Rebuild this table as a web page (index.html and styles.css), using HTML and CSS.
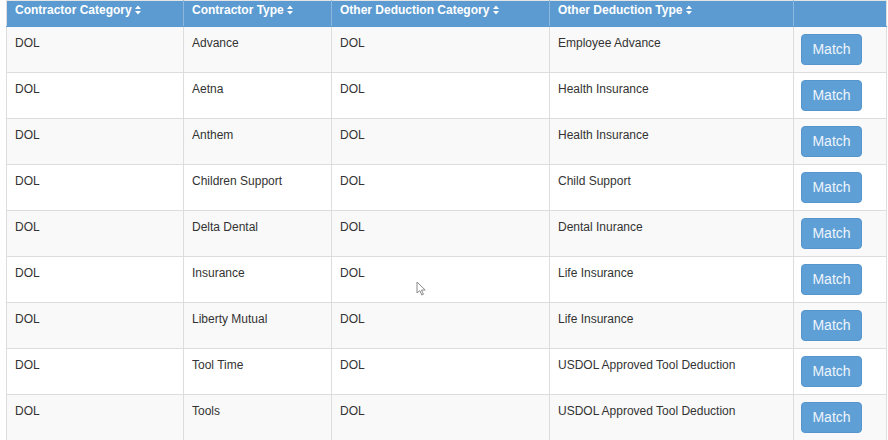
FILE: index.html
```html
<!DOCTYPE html>
<html>
<head>
<meta charset="utf-8">
<link rel="stylesheet" href="styles.css">
</head>
<body>
<div class="wrap">
<table class="grid">
  <colgroup>
    <col class="c1"><col class="c2"><col class="c3"><col class="c4"><col class="c5">
  </colgroup>
  <thead>
    <tr>
      <th>Contractor Category <svg class="sort" viewBox="0 0 6 10" width="6" height="10"><path d="M0 4 L3 0.5 L6 4 Z M0 6 L3 9.5 L6 6 Z" fill="#fff"/></svg></th>
      <th>Contractor Type <svg class="sort" viewBox="0 0 6 10" width="6" height="10"><path d="M0 4 L3 0.5 L6 4 Z M0 6 L3 9.5 L6 6 Z" fill="#fff"/></svg></th>
      <th>Other Deduction Category <svg class="sort" viewBox="0 0 6 10" width="6" height="10"><path d="M0 4 L3 0.5 L6 4 Z M0 6 L3 9.5 L6 6 Z" fill="#fff"/></svg></th>
      <th>Other Deduction Type <svg class="sort" viewBox="0 0 6 10" width="6" height="10"><path d="M0 4 L3 0.5 L6 4 Z M0 6 L3 9.5 L6 6 Z" fill="#fff"/></svg></th>
      <th></th>
    </tr>
  </thead>
  <tbody>
    <tr><td>DOL</td><td>Advance</td><td>DOL</td><td>Employee Advance</td><td><button class="btn">Match</button></td></tr>
    <tr><td>DOL</td><td>Aetna</td><td>DOL</td><td>Health Insurance</td><td><button class="btn">Match</button></td></tr>
    <tr><td>DOL</td><td>Anthem</td><td>DOL</td><td>Health Insurance</td><td><button class="btn">Match</button></td></tr>
    <tr><td>DOL</td><td>Children Support</td><td>DOL</td><td>Child Support</td><td><button class="btn">Match</button></td></tr>
    <tr><td>DOL</td><td>Delta Dental</td><td>DOL</td><td>Dental Inurance</td><td><button class="btn">Match</button></td></tr>
    <tr><td>DOL</td><td>Insurance</td><td>DOL</td><td>Life Insurance</td><td><button class="btn">Match</button></td></tr>
    <tr><td>DOL</td><td>Liberty Mutual</td><td>DOL</td><td>Life Insurance</td><td><button class="btn">Match</button></td></tr>
    <tr><td>DOL</td><td>Tool Time</td><td>DOL</td><td>USDOL Approved Tool Deduction</td><td><button class="btn">Match</button></td></tr>
    <tr><td>DOL</td><td>Tools</td><td>DOL</td><td>USDOL Approved Tool Deduction</td><td><button class="btn">Match</button></td></tr>
  </tbody>
</table>
<svg class="cursor" viewBox="0 0 12 16" width="12" height="16"><path d="M1 1 L1 12 L3.8 9.6 L5.8 14 L7.4 13.3 L5.5 9 L9.2 9 Z" fill="#fff" stroke="#8a8a8a" stroke-width="1"/></svg>
</div>
</body>
</html>
```

FILE: styles.css
```css
html, body {
  margin: 0;
  padding: 0;
  background: #ffffff;
}
body {
  font-family: "Liberation Sans", Arial, Helvetica, sans-serif;
  font-size: 12px;
  color: #333333;
}
.wrap {
  position: relative;
  padding: 0 0 0 6px;
  width: 880px;
}
.grid {
  width: 880px;
  border-collapse: collapse;
  table-layout: fixed;
  border-top: 1px solid #e4e4e4;
  border-left: 1px solid #dddddd;
  border-right: 1px solid #dddddd;
}
.c1 { width: 177px; }
.c2 { width: 148px; }
.c3 { width: 218px; }
.c4 { width: 244px; }
.c5 { width: 93px; }
.grid th {
  background: #5b9bd1;
  color: #ffffff;
  font-weight: bold;
  text-align: left;
  padding: 1px 8px 7px;
  line-height: 17px;
  height: 17px;
  border-left: 1px solid #8db8de;
  border-bottom: 1px solid #5b9bd1;
  white-space: nowrap;
}
.grid th:first-child { border-left: none; }
.sort {
  vertical-align: -1px;
}
.grid td {
  padding: 8px 8px 6px;
  line-height: 17px;
  vertical-align: top;
  border-top: 1px solid #dddddd;
  border-left: 1px solid #dddddd;
  height: 31px;
}
.grid tbody tr:nth-child(odd) td { background: #f9f9f9; }
.grid tbody tr:nth-child(even) td { background: #ffffff; }
.grid td:last-child { padding-top: 7px; padding-bottom: 7px; }
.btn {
  display: block;
  width: 61px;
  height: 31px;
  margin-left: -1px;
  padding: 0;
  border: 1px solid #5695cd;
  border-radius: 4px;
  background: #5e9fd6;
  color: #eef5fb;
  font-family: "Liberation Sans", Arial, Helvetica, sans-serif;
  font-size: 14px;
  line-height: 29px;
  text-align: center;
}
.cursor {
  position: absolute;
  left: 416px;
  top: 281px;
}
```
